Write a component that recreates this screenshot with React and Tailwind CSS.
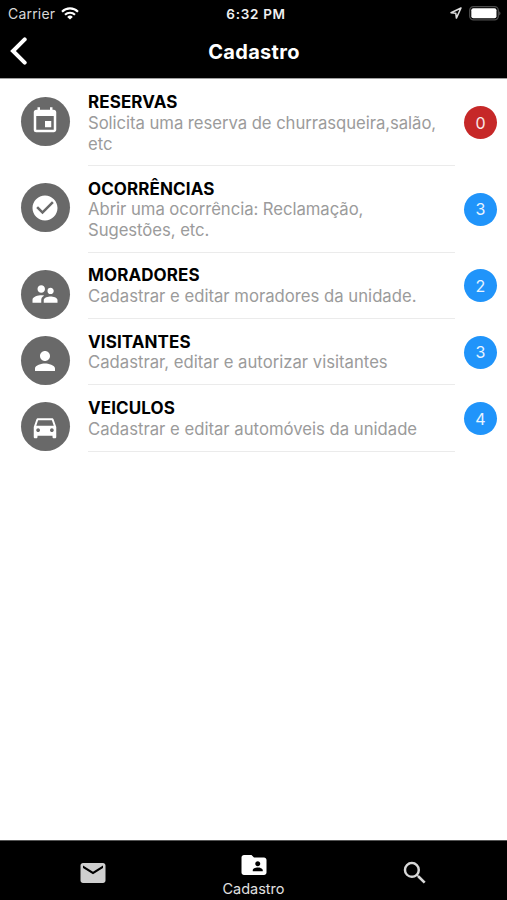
import {
  MdCheckCircle,
  MdDirectionsCar,
  MdEvent,
  MdFolderShared,
  MdMail,
  MdPerson,
  MdSearch,
  MdSupervisorAccount,
} from "react-icons/md";

const items = [
  {
    title: "RESERVAS",
    lines: ["Solicita uma reserva de churrasqueira,salão,", "etc"],
    Icon: MdEvent,
    count: 0,
    badge: "bg-[#c62828]",
    size: "h-[86.6px] tracking-[-0.05px]",
  },
  {
    title: "OCORRÊNCIAS",
    lines: ["Abrir uma ocorrência: Reclamação,", "Sugestões, etc."],
    Icon: MdCheckCircle,
    count: 3,
    badge: "bg-[#2094fa]",
    size: "h-[86.6px] tracking-[-0.05px]",
  },
  {
    title: "MORADORES",
    lines: ["Cadastrar e editar moradores da unidade."],
    Icon: MdSupervisorAccount,
    count: 2,
    badge: "bg-[#2094fa]",
    size: "h-[66.4px]",
  },
  {
    title: "VISITANTES",
    lines: ["Cadastrar, editar e autorizar visitantes"],
    Icon: MdPerson,
    count: 3,
    badge: "bg-[#2094fa]",
    size: "h-[66.4px]",
  },
  {
    title: "VEICULOS",
    lines: ["Cadastrar e editar automóveis da unidade"],
    Icon: MdDirectionsCar,
    count: 4,
    badge: "bg-[#2094fa]",
    size: "h-[66.4px]",
  },
];

function StatusBar() {
  return (
    <div className="flex h-[27px] items-center pr-[6px] pl-[8px] text-white">
      <div className="flex flex-1 items-center gap-[6px]">
        <span className="text-[14px] tracking-[0.2px] text-[#d8d8d8]">Carrier</span>
        <svg width="18" height="13" viewBox="0 0 18 13" className="-mt-px" fill="none" stroke="currentColor" strokeWidth="2.1">
          <path d="M1 4.7a11.4 11.4 0 0 1 16 0" />
          <path d="M4 7.8a7.1 7.1 0 0 1 10 0" />
          <path d="M9 12.6 6.2 9.9a4 4 0 0 1 5.6 0z" fill="currentColor" stroke="none" />
        </svg>
      </div>
      <span className="pt-[2px] pl-[3px] text-[13.5px] font-semibold tracking-[0.7px] text-[#f0f0f0]">6:32 PM</span>
      <div className="-mt-px flex flex-1 items-center justify-end gap-[7px]">
        <svg width="12" height="12" viewBox="0 0 12 12" fill="none" stroke="#dedede" strokeWidth="1.5" strokeLinejoin="round">
          <path d="M11 1 1 5.7l4.8.6.6 4.8z" />
        </svg>
        <svg width="32" height="15" viewBox="0 0 32 15">
          <rect x="0.7" y="0.7" width="28.6" height="13.2" rx="3.8" fill="none" stroke="#4c4c4c" strokeWidth="1.3" />
          <rect x="2.3" y="2.3" width="25.2" height="10" rx="2" fill="#fff" />
          <path d="M30.3 5.2c1.5.8 1.5 3.4 0 4.2z" fill="#666" />
        </svg>
      </div>
    </div>
  );
}

function Header() {
  return (
    <div className="grid h-[51px] grid-cols-[1fr_auto_1fr] items-center pr-[10px] pl-[10px] text-white">
      <svg
        width="18"
        height="28"
        viewBox="0 0 18 28"
        className="-mt-[3px]"
        fill="none"
        stroke="currentColor"
        strokeWidth="4"
        strokeLinecap="round"
      >
        <path d="M14.7 2.4 3 14l11.7 11.6" />
      </svg>
      <h1 className="-mt-px pl-px text-[20px] font-bold tracking-[0.3px]">Cadastro</h1>
    </div>
  );
}

function MenuItem({ item }) {
  const { title, lines, Icon, count, badge, size } = item;
  return (
    <li className={`flex pr-[10px] pl-[20.5px] ${size}`}>
      <div className="mt-[17px] flex size-[49px] shrink-0 items-center justify-center rounded-full bg-[#696969]">
        <Icon className="size-[30px] text-white" />
      </div>
      <div className="ml-[18.5px] w-[367px] shrink-0 border-b border-[#ebebeb] pt-[12.5px]">
        <h2 className="text-[17px] leading-[20.8px] font-bold tracking-[0.1px] whitespace-nowrap text-black">{title}</h2>
        {lines.map((line) => (
          <p key={line} className="text-[16.7px] leading-[20.8px] whitespace-nowrap text-[#9b9b9b]">
            {line}
          </p>
        ))}
      </div>
      <div className="ml-auto flex items-center">
        <span className={`flex size-[33px] items-center justify-center rounded-full text-[16px] text-white/90 ${badge}`}>
          {count}
        </span>
      </div>
    </li>
  );
}

function TabBar() {
  return (
    <nav className="flex h-[60px] items-center border-t border-[#555] bg-black px-[12px]">
      <div className="flex flex-1 justify-center pt-[5px]">
        <MdMail className="size-[30px] text-[#cfcfcf]" />
      </div>
      <div className="flex flex-1 flex-col items-center pt-[5px]">
        <MdFolderShared className="size-[30px] text-white" />
        <span className="text-[14.5px] leading-[17px] text-[#e0e0e0]">Cadastro</span>
      </div>
      <div className="flex flex-1 justify-center pt-[5px]">
        <MdSearch className="size-[30px] text-[#d8d8d8]" />
      </div>
    </nav>
  );
}

export default function App() {
  return (
    <div className="flex h-[900px] w-[507px] flex-col overflow-hidden bg-white font-['Inter',sans-serif]">
      <header className="h-[79px] shrink-0 border-b border-[#a0a0a0] bg-black">
        <StatusBar />
        <Header />
      </header>
      <ul className="flex-1 pt-[0.5px]">
        {items.map((item) => (
          <MenuItem key={item.title} item={item} />
        ))}
      </ul>
      <TabBar />
    </div>
  );
}
